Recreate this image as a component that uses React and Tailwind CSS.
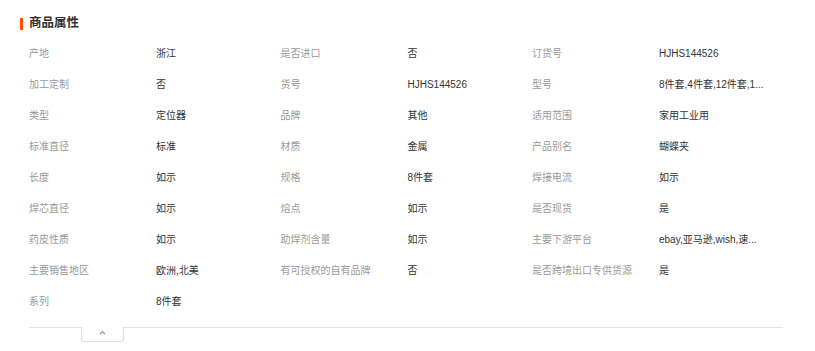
import React from "react";

const rows = [
  [["产地", "浙江"], ["是否进口", "否"], ["订货号", "HJHS144526"]],
  [["加工定制", "否"], ["货号", "HJHS144526"], ["型号", "8件套,4件套,12件套,1..."]],
  [["类型", "定位器"], ["品牌", "其他"], ["适用范围", "家用工业用"]],
  [["标准直径", "标准"], ["材质", "金属"], ["产品别名", "蝴蝶夹"]],
  [["长度", "如示"], ["规格", "8件套"], ["焊接电流", "如示"]],
  [["焊芯直径", "如示"], ["熔点", "如示"], ["是否现货", "是"]],
  [["药皮性质", "如示"], ["助焊剂含量", "如示"], ["主要下游平台", "ebay,亚马逊,wish,速..."]],
  [["主要销售地区", "欧洲,北美"], ["有可授权的自有品牌", "否"], ["是否跨境出口专供货源", "是"]],
  [["系列", "8件套"]],
];

export default function App() {
  return (
    <div
      className="w-[815px] h-[351px] bg-white pl-[20px] pt-[17px] overflow-hidden"
      style={{ fontFamily: '"Liberation Sans", "Noto Sans CJK SC", sans-serif' }}
    >
      {/* Title */}
      <div className="flex items-center h-[13px]">
        <div className="w-[3px] h-[12px] bg-[#ff5000]" />
        <h2 className="ml-[6px] text-[12.5px] font-bold text-[#333] leading-none">
          商品属性
        </h2>
      </div>

      {/* Attributes */}
      <div className="mt-[8px] pl-[9px]">
        {rows.map((row, i) => (
          <div key={i} className="flex h-[31px] items-center">
            {row.map(([label, value], j) => (
              <div key={j} className="flex w-[251.5px] items-center text-[10px] leading-none">
                <span className="w-[127px] text-[#999] whitespace-nowrap">{label}</span>
                <span className="w-[115px] whitespace-nowrap text-[#333]">{value}</span>
              </div>
            ))}
          </div>
        ))}
      </div>

      {/* Collapse */}
      <div className="mt-[10px] pl-[9px]">
        <div className="w-[754px] border-t border-[#e3e3e3]" />
        <div className="ml-[52px] -mt-px w-[43px] h-[15px] bg-white border-x border-b border-[#ddd] rounded-b-[3px] flex justify-center pt-[3px]">
          <svg width="7" height="5" viewBox="0 0 7 5" fill="none">
            <path d="M1 4L3.5 1.5L6 4" stroke="#8a9bb0" strokeWidth="1.2" />
          </svg>
        </div>
      </div>
    </div>
  );
}
